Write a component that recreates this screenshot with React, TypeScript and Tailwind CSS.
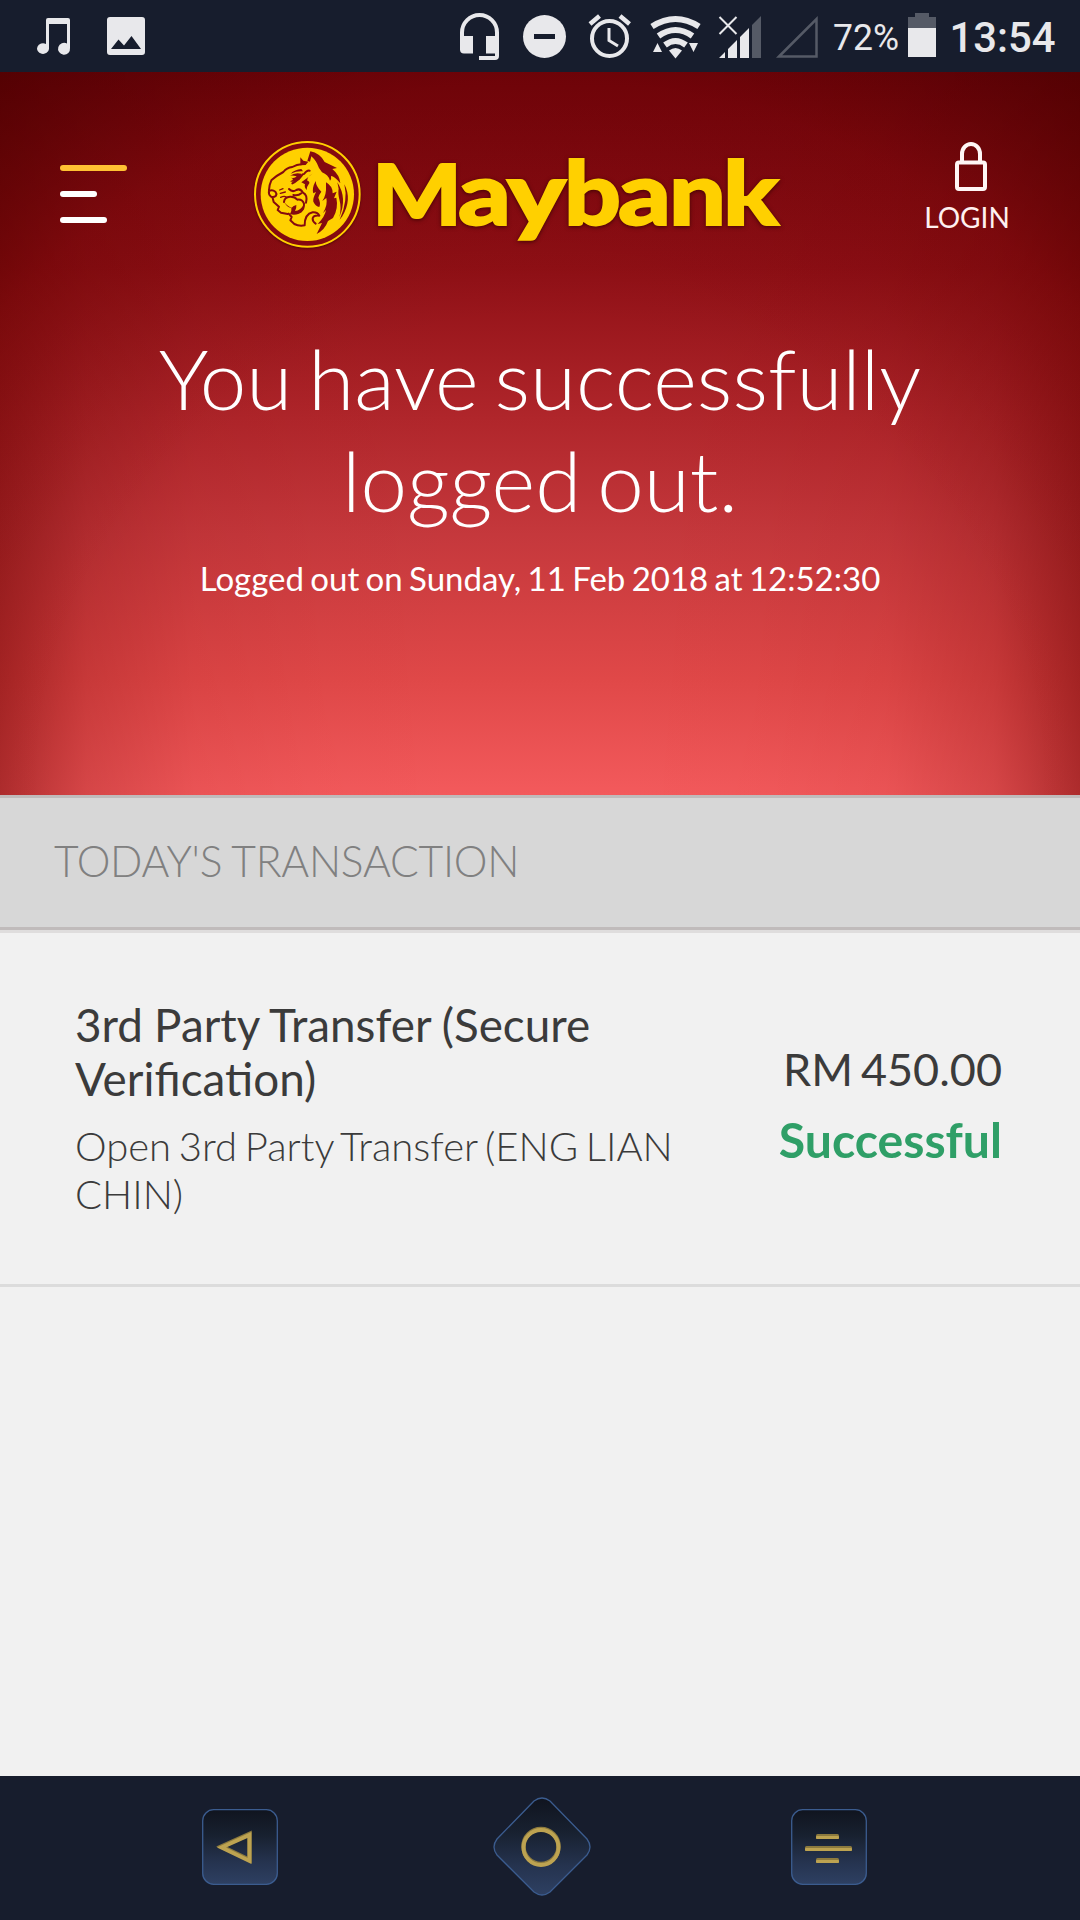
function StatusBar() {
  return (
    <div className="h-[72px] bg-[#171d2d] font-['Roboto',sans-serif] text-[#e8e8eb]">
      <svg width="1080" height="72" viewBox="0 0 1080 72" fill="#e8e8eb">
        {/* music */}
        <path d="M46 20q0-2 2-2h20q2 0 2 2v28a6 6 0 1 1-3-4.500V24H49v25a6 5.300 0 1 1-3-5z" />
        {/* picture */}
        <path fillRule="evenodd" d="M110 17h32q3 0 3 3v32q0 3-3 3h-32q-3 0-3-3V20q0-3 3-3zM111 49h30l-9.500-13-7.500 9.500-5.500-6z" />
        {/* headset */}
        <path d="M460 36v-3.500a19.500 19.500 0 0 1 39 0V56q0 4-4 4h-16v-4h16v-2.500h-9V36h9v-3.500a15.500 15.500 0 0 0-31 0V36h9v17.500h-9q-4 0-4-4z" />
        {/* do not disturb */}
        <circle cx="544.500" cy="36.500" r="21.500" />
        <path d="M534 34h21v5h-21z" fill="#171d2d" />
        {/* alarm */}
        <g fill="none" stroke="#e8e8eb">
          <circle cx="609.500" cy="38.500" r="17.500" strokeWidth="4" />
          <path d="M609 28v12.500l9 5.500" strokeWidth="3" />
          <path d="M590 24l9.500-8M629.500 24l-9.500-8" strokeWidth="4.500" />
        </g>
        {/* wifi */}
        <g fill="none" stroke="#e8e8eb" strokeWidth="6">
          <path d="M652 26.500q23.500-15 47 0" />
          <path d="M658.500 36q17-12 34 0" />
          <path d="M665 45q10.500-8 21 0" />
        </g>
        <path d="M669 50.500q6.500-5 13 0l-6.500 8zM653 52l4.500-9 4.500 9zM689 43h9l-4.500 9z" />
        {/* signal */}
        <path d="M719.500 17l17 17M736.500 17l-17 17" stroke="#e8e8eb" strokeWidth="2" />
        <path d="M719 58l6-6v6zM728 58V49l9-9v18zM740 58V37l9-9v30z" />
        <path d="M752 58V25l9-9v42z" fill="#555a66" />
        <path d="M779 56.500l37.500-37.500v37.500z" fill="none" stroke="#555a66" strokeWidth="2.500" />
        <text x="833" y="50" fontSize="36" textLength="66" lengthAdjust="spacingAndGlyphs">72%</text>
        <path d="M908 28V17h7v-4h14v4h7v11z" fill="#555a66" />
        <path d="M908 28h28v29h-28z" />
        <text x="949.500" y="52" fontSize="42" fontWeight="500" textLength="106" lengthAdjust="spacingAndGlyphs">13:54</text>
      </svg>
    </div>
  );
}

function Emblem() {
  return (
    <svg className="shrink-0 drop-shadow-[0_1px_1px_rgba(50,0,0,0.6)]" width="130" height="130" viewBox="0 0 390 390">
      <circle cx="202" cy="193" r="157" fill="#850a0f" stroke="#ffd000" strokeWidth="6" />
      <circle cx="202" cy="193" r="140" fill="#ffd000" />
      <g fill="none" stroke="#850a0f" strokeLinejoin="round" strokeLinecap="round">
        {/* brow, ear and muzzle outline */}
        <path strokeWidth="6" d="M87 180q1-17 7-29 18-16 36-25 10-13 27-15 14-8 27-8" />
        <path strokeWidth="6" d="M87 183q10-5 19 2 5 6 2 12-8 7-16 2-7-6-5-16M98 204l3 12 16 14-4 10 10 8 20 4" />
        {/* whisker marks */}
        <path strokeWidth="4" d="M119 180l10-4M121 190l15-4M122 202q10-5 17-1" />
        {/* lips, tongue and jaw */}
        <path strokeWidth="6" d="M132 216q1-15 18-16 14-1 22 9 15-2 20 12 1 16-10 23" />
        <path strokeWidth="6" d="M146 251l9 10-4 10 12 11q13 7 31 4 0-34 24-39 15-1 20 10-17-2-20 8-1 9 9 16" />
        {/* cheek and eye */}
        <path strokeWidth="6" d="M147 177q10 11 22 3 12-6 20 8 15 8 9 30M157 160q18-9 31-27M192 132q9-12 17-10M160 195q15 3 24-5" />
      </g>
      <g fill="#850a0f">
        <path d="M130 212q8 18 24 22 2 9-4 18 12 5 27-1 18-6 15-28-10 19-27 20 5-8 4-18-9 2-14 8-14-4-25-21z" />
        <path d="M150 137q15-11 34-6l-4 17q-15 11-30 6 9-3 9-7l-6-4q11 3 17-4-11-3-20-2z" />
        <path d="M152 131q12-12 32-14l5 7q-17-2-37 7zM181 82l9 10 15 3-8 10-16 1z" />
        <path d="M211 64q28 5 43 32l37 18-14 3q22 18 24 43-17-21-28-22 2 10-3 14-5-18-24-25l-9-13q-8-22-23-35l-4 16-8-3z" />
        <path d="M218 86q16 10 13 32-14-8-16-22z" fill="#ffd000" />
        <path d="M217 131q-17 11-15 21 10 3 4 11-7 9-6 17-8-8-5-17l-11-6q20-15 33-26zM227 153q-12 22-7 37l8-4q-10 20-8 29 7 14 18 16 5-12-3-28 2-9 9-18-16-15-17-32z" />
        <path d="M258 157q21 12 20 33l12-5-8 20 7-2q7 32-10 61l-15 9q-9 26-34 39l16-33-13 3q22-22 25-42l-9 9q15-25 10-45l-12 9q13-18 11-47z" />
        <path d="M292 157q31 49 6 104 7-28 1-49-6-22-3-36zM313 163q24 45-6 96l-8 10q26-57 14-106z" />
      </g>
    </svg>
  );
}

const wordmark = [
  { glyph: "M", x: 2, width: 90, size: 83 },
  { glyph: "a", x: 88, width: 53, size: 88 },
  { glyph: "y", x: 137, width: 59, size: 88 },
  { glyph: "b", x: 194, width: 57, size: 88 },
  { glyph: "a", x: 248, width: 53, size: 88 },
  { glyph: "n", x: 299, width: 57, size: 88 },
  { glyph: "k", x: 353, width: 56, size: 88 },
];

function Wordmark() {
  return (
    <svg className="shrink-0 drop-shadow-[0_1px_2px_rgba(50,0,0,0.8)]" width="430" height="130" viewBox="0 0 430 130">
      {wordmark.map((l) => (
        <text
          key={l.x}
          x={l.x}
          y="94.600"
          textLength={l.width}
          lengthAdjust="spacingAndGlyphs"
          fontFamily="Lato, sans-serif"
          fontWeight="900"
          fontSize={l.size}
          fill="#ffd000"
          stroke="#ffd000"
          strokeWidth="1.800"
        >
          {l.glyph}
        </text>
      ))}
    </svg>
  );
}

function Header() {
  return (
    <header className="relative h-[723px] bg-[linear-gradient(180deg,#750309_0%,#8f0f15_27%,#b0262b_48%,#c5383c_64%,#e04848_84%,#f35a5c_100%)] text-white">
      <div className="absolute inset-0 bg-[linear-gradient(90deg,rgba(110,0,0,0.5)_0%,rgba(110,0,0,0.22)_8%,rgba(120,0,0,0.07)_18%,rgba(120,0,0,0.02)_30%,transparent_42%,transparent_58%,rgba(120,0,0,0.02)_70%,rgba(120,0,0,0.07)_82%,rgba(110,0,0,0.22)_92%,rgba(110,0,0,0.5)_100%)]" />
      <div className="absolute inset-0 bg-[radial-gradient(ellipse_75%_110%_at_50%_100%,transparent_60%,rgba(60,0,0,0.12)_90%,rgba(40,0,0,0.5)_120%)]" />
      <div className="relative flex flex-col">
        <div className="flex h-[188px] items-start pt-[58px]">
          <div className="flex w-[240px] shrink-0 flex-col gap-[20px] pt-[35px] pl-[60px]">
            <div className="h-[6px] w-[67px] rounded-sm bg-[#ffc233]" />
            <div className="h-[6px] w-[37px] rounded-sm bg-white" />
            <div className="h-[6px] w-[47px] rounded-sm bg-white" />
          </div>
          <Emblem />
          <Wordmark />
          <div className="ml-[120px] flex w-[94px] flex-col items-center pt-[12px]">
            <svg className="ml-[7px]" width="36" height="50" viewBox="0 0 36 50" fill="none" stroke="#fff6f6" strokeWidth="4">
              <rect x="4" y="20.500" width="28" height="26.500" rx="2" />
              <path d="M9 20V12a9 10 0 0 1 18 0v8" />
            </svg>
            <span className="mt-[6px] font-['Lato',sans-serif] text-[28px] leading-[38px] text-[#fff0f0]">LOGIN</span>
          </div>
        </div>
        <h1 className="mt-[67px] text-center font-['Lato',sans-serif] text-[83.6px] leading-[102px] font-light [word-spacing:-0.08em]">
          You have successfully
          <br />
          logged out.
        </h1>
        <p className="mt-[25px] text-center font-['Lato',sans-serif] text-[33px] leading-[44px] [word-spacing:-2.1px]">
          Logged out on Sunday, 11 Feb 2018 at 12:52:30
        </p>
      </div>
    </header>
  );
}

function NavBar() {
  return (
    <nav className="h-[144px] bg-[#171d2d]">
      <svg width="1080" height="144" viewBox="0 0 1080 144">
        <defs>
          <linearGradient id="key" x1="0" y1="0" x2="0" y2="1">
            <stop offset="0" stopColor="#10141f" />
            <stop offset="0.350" stopColor="#182130" />
            <stop offset="0.700" stopColor="#25334f" />
            <stop offset="1" stopColor="#2e4062" />
          </linearGradient>
        </defs>
        <g fill="url(#key)" stroke="#3b5c8f" strokeWidth="1.300">
          <rect x="202.700" y="33.700" width="74.600" height="74.600" rx="11" />
          <path d="M534 25q8-6 16 0l37 38q6 8 0 16l-37 37q-8 6-16 0l-37-37q-6-8 0-16z" />
          <rect x="791.700" y="33.700" width="74.600" height="74.600" rx="11" />
        </g>
        <g fill="none" stroke="#8c7a3e" strokeWidth="4.500">
          <path d="M221.500 70.500l28-12.500v26z" />
          <circle cx="541" cy="70.500" r="17.500" />
        </g>
        <g fill="none" stroke="#bda351" strokeWidth="3.800">
          <path d="M221.500 71.500l28-12.500v26z" />
          <circle cx="541" cy="71.500" r="17.500" />
        </g>
        <g fill="#8c7a3e">
          <rect x="816" y="58" width="23" height="5" rx="1.500" />
          <rect x="805" y="70" width="47" height="5" rx="1.500" />
          <rect x="816" y="82" width="23" height="5" rx="1.500" />
        </g>
        <g fill="#bda351">
          <rect x="816" y="60" width="23" height="3" rx="1" />
          <rect x="805" y="72" width="47" height="3" rx="1" />
          <rect x="816" y="84" width="23" height="3" rx="1" />
        </g>
      </svg>
    </nav>
  );
}

export default function App() {
  return (
    <div className="flex h-[1920px] w-[1080px] flex-col overflow-hidden bg-[#f1f1f1] font-['Lato',sans-serif]">
      <StatusBar />
      <Header />
      <div className="border-b-[3px] border-[#dfdddd]">
        <h2 className="h-[135px] border-y-[3px] border-[#c0bbbb] bg-[#d7d7d7] pl-[54px] text-[42.6px] leading-[126px] font-light tracking-[-0.25px] text-[#808080] [word-spacing:-1px]">
          TODAY'S TRANSACTION
        </h2>
      </div>
      <section className="flex h-[354px] justify-between border-b-[3px] border-[#dcdcdc] pr-[78px] pl-[75px]">
        <div className="w-[620px] pt-[65px]">
          <h3 className="text-[45.8px] leading-[54px] text-[#3b3b3b] [word-spacing:-0.6px]">3rd Party Transfer (Secure Verification)</h3>
          <p className="mt-[16px] text-[40px] leading-[48px] font-light text-[#3b3b3b] [word-spacing:-3.2px]">Open 3rd Party Transfer (ENG LIAN CHIN)</p>
        </div>
        <div className="pt-[100px] text-right">
          <p className="text-[45px] leading-[72px] text-[#3b3b3b] [word-spacing:-3.6px]">RM 450.00</p>
          <p className="-mt-[2px] text-[48.2px] leading-[72px] font-bold text-[#2f9f67]">Successful</p>
        </div>
      </section>
      <div className="flex-1" />
      <NavBar />
    </div>
  );
}
